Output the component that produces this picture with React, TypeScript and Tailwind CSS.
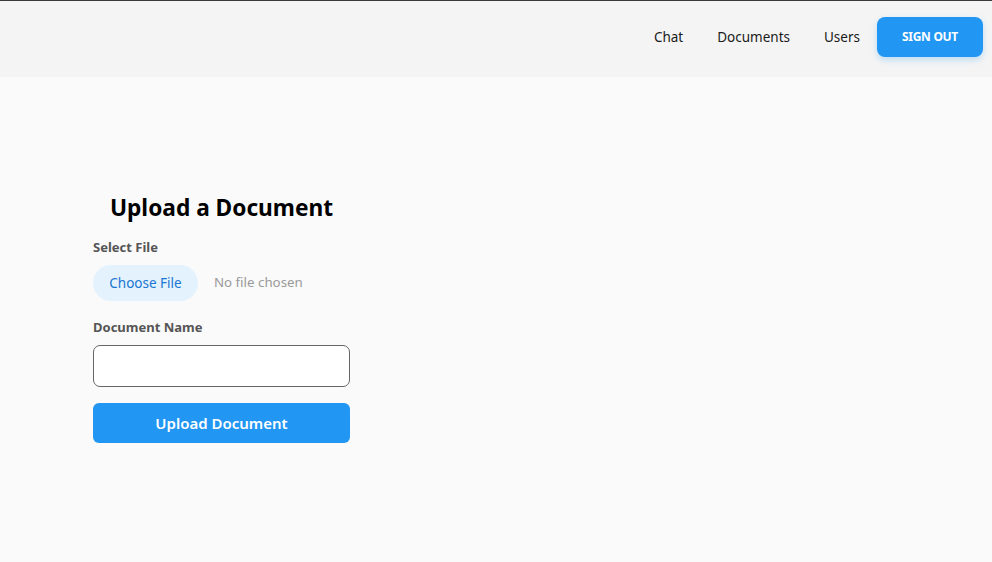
import React from "react";

export default function App() {
  const font = { fontFamily: '"Noto Sans", "Open Sans", sans-serif' };
  return (
    <div className="min-h-[562px] bg-[#fafafa] flex flex-col" style={font}>
      <header className="h-[77px] bg-[#f4f4f4] border-t border-[#3a3a3a] flex items-center justify-end pr-[9px] pb-[4px]">
        <nav className="flex items-center text-[13.5px] text-[#1a1a1a]">
          <a className="px-[17px]">Chat</a>
          <a className="px-[17px]">Documents</a>
          <a className="px-[17px]">Users</a>
        </nav>
        <button className="ml-0 h-[40px] w-[106px] rounded-[8px] bg-[#2196f3] text-white text-[12px] font-bold tracking-tight shadow-[0_3px_6px_rgba(33,150,243,0.25)]">
          SIGN OUT
        </button>
      </header>
      <main className="flex-1 pl-[93px] pt-[115px]">
        <div className="w-[257px] flex flex-col">
          <h1 className="text-[22.7px] leading-[32px] font-bold text-black text-center">Upload a Document</h1>
          <label className="mt-[14px] text-[13px] leading-[18px] font-bold text-[#555]">Select File</label>
          <div className="mt-[9px] flex items-center">
            <span className="h-[36px] w-[105px] rounded-full bg-[#e3f2fd] text-[#1976d2] text-[13.5px] flex items-center justify-center">Choose File</span>
            <span className="ml-[16px] text-[13.3px] text-[#999]">No file chosen</span>
          </div>
          <label className="mt-[17px] text-[13px] leading-[18px] font-bold text-[#555]">Document Name</label>
          <input className="mt-[9px] h-[42px] w-full rounded-[7px] border border-[#666] bg-white px-3 outline-none" />
          <button className="mt-[16px] h-[40px] w-full rounded-[6px] bg-[#2196f3] text-white text-[15px] font-semibold">Upload Document</button>
        </div>
      </main>
    </div>
  );
}
